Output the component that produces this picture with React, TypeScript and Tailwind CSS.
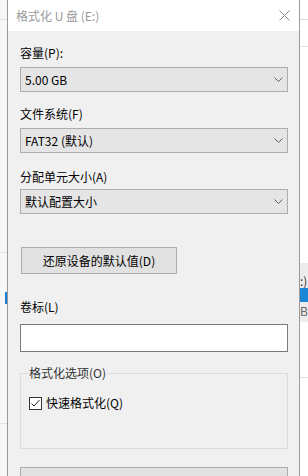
import React from "react";

// Windows "格式化 U 盘" dialog over a partially visible explorer window

function Chevron() {
  return (
    <svg width="9" height="5" viewBox="0 0 9 5" className="shrink-0">
      <polyline points="0.5,0.5 4.5,4.5 8.5,0.5" fill="none" stroke="#606060" strokeWidth="1" />
    </svg>
  );
}

function Select({ value, className = "" }: { value: string; className?: string }) {
  return (
    <div
      className={`flex shrink-0 items-center justify-between h-[25px] w-[268px] border border-[#adadad] bg-[#e5e5e5] pl-[4px] pr-[4px] ${className}`}
    >
      <span className="leading-[16px]">{value}</span>
      <Chevron />
    </div>
  );
}

function Label({ text, className = "" }: { text: string; className?: string }) {
  return <div className={`shrink-0 h-[16px] leading-[16px] ${className}`}>{text}</div>;
}

function LeftEdge() {
  return (
    <div className="flex flex-col w-[7px] shrink-0 bg-[#f7f7f7]">
      <div className="h-[20px] border-b border-[#dedede]" />
      <div className="h-[233px] border-b border-[#e2e2e2]" />
      <div className="h-[39px]" />
      <div className="h-[12px] ml-[5px] w-[2px] bg-[#1a7fd4]" />
      <div className="h-[120px] border-b border-[#e2e2e2]" />
    </div>
  );
}

function RightEdge() {
  return (
    <div className="flex flex-col w-[8px] shrink-0 bg-white overflow-hidden text-[#333]">
      <div className="h-[20px] border-b border-[#dedede]" />
      <div className="h-[27px] border-b border-[#e4e4e4]" />
      <div className="h-[216px]" />
      <div className="flex flex-col bg-[#ececec]">
        <div className="h-[25px] flex items-end leading-[14px] whitespace-nowrap">:)</div>
        <div className="h-[14px] bg-[#1c86d6]" />
        <div className="h-[20px] leading-[18px] text-[#666]">B</div>
      </div>
      <div className="h-[56px] border-b border-[#e2e2e2]" />
    </div>
  );
}

function Dialog() {
  return (
    <div className="flex flex-col w-[293px] shrink-0 overflow-hidden border-x border-[#9a9a9a] bg-[#f0f0f0]">
      <div className="flex shrink-0 items-center justify-between h-[31px] bg-white pl-[8px] pr-[9px]">
        <span className="text-[#9a9a9a] leading-[16px]">格式化 U 盘 (E:)</span>
        <svg width="11" height="11" viewBox="0 0 11 11">
          <path d="M0.5 0.5 L10.5 10.5 M10.5 0.5 L0.5 10.5" stroke="#8a8a8a" strokeWidth="1" />
        </svg>
      </div>

      <div className="flex shrink-0 flex-col pl-[12px] pr-[10px]">
        <Label text="容量(P):" className="mt-[14px]" />
        <Select value="5.00 GB" className="mt-[6px]" />

        <Label text="文件系统(F)" className="mt-[14px]" />
        <Select value="FAT32 (默认)" className="mt-[6px]" />

        <Label text="分配单元大小(A)" className="mt-[16px]" />
        <Select value="默认配置大小" className="mt-[4px]" />

        <button className="shrink-0 mt-[33px] ml-[1px] h-[27px] w-[156px] border border-[#adadad] bg-[#e1e1e1] leading-[16px]">
          还原设备的默认值(D)
        </button>

        <Label text="卷标(L)" className="mt-[25px]" />
        <div className="shrink-0 mt-[9px] h-[28px] w-[268px] border border-[#7a7a7a] bg-white" />

        <fieldset className="shrink-0 mt-[13px] h-[84px] w-[268px] border border-[#dcdcdc] pl-[8px]">
          <legend className="ml-[-1px] px-[1px] leading-[16px] text-[#333]">格式化选项(O)</legend>
          <div className="flex items-center gap-[4px] mt-[14px] h-[16px]">
            <div className="flex items-center justify-center w-[13px] h-[13px] border border-[#333] bg-white">
              <svg width="11" height="11" viewBox="0 0 11 11">
                <polyline points="1.5,5.5 4,8 9.5,2" fill="none" stroke="#222" strokeWidth="1" />
              </svg>
            </div>
            <span className="leading-[16px]">快速格式化(Q)</span>
          </div>
        </fieldset>

        <div className="shrink-0 mt-[18px] h-[27px] w-[268px] border border-[#adadad] bg-[#e1e1e1]" />
      </div>
    </div>
  );
}

export default function App() {
  return (
    <div className="flex w-[308px] h-[476px] overflow-hidden bg-white text-[12px] text-black font-['Noto_Sans_CJK_SC','Microsoft_YaHei',sans-serif]">
      <LeftEdge />
      <Dialog />
      <RightEdge />
    </div>
  );
}
